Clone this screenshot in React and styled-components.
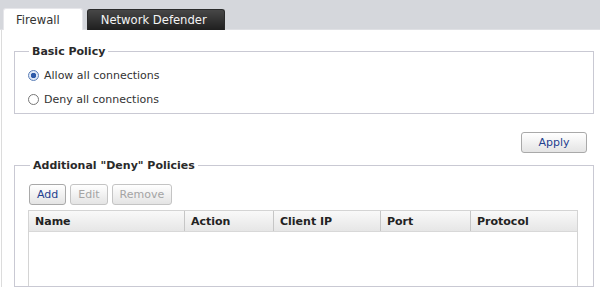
import React from "react";
import styled, { createGlobalStyle } from "styled-components";

const GlobalStyle = createGlobalStyle`
  html, body {
    margin: 0;
    padding: 0;
    background: #ffffff;
  }
  body {
    font-family: "DejaVu Sans", Verdana, sans-serif;
    font-size: 11px;
    color: #222;
  }
`;

const columns = [
  { label: "Name", width: 156 },
  { label: "Action", width: 89 },
  { label: "Client IP", width: 107 },
  { label: "Port", width: 90 },
  { label: "Protocol", width: 106 },
];

const App = () => {
  return (
    <>
      <GlobalStyle />
      <Page>
        <TabBar>
          <Tab active>Firewall</Tab>
          <Tab>Network Defender</Tab>
        </TabBar>
        <Content>
          <Group>
            <Legend>Basic Policy</Legend>
            <RadioRow>
              <Radio checked />
              Allow all connections
            </RadioRow>
            <RadioRow>
              <Radio />
              Deny all connections
            </RadioRow>
          </Group>

          <ApplyRow>
            <Button primary wide>
              Apply
            </Button>
          </ApplyRow>

          <Group deny>
            <Legend>Additional "Deny" Policies</Legend>
            <Toolbar>
              <Button primary>Add</Button>
              <Button disabled>Edit</Button>
              <Button disabled>Remove</Button>
            </Toolbar>
            <Table>
              <HeaderRow>
                {columns.map((c) => (
                  <HeaderCell key={c.label} style={{ width: c.width }}>
                    {c.label}
                  </HeaderCell>
                ))}
              </HeaderRow>
              <Body />
            </Table>
          </Group>
        </Content>
      </Page>
    </>
  );
};

export default App;

const Page = styled.div`
  width: 600px;
  height: 287px;
  overflow: hidden;
  display: flex;
  flex-direction: column;
`;

const TabBar = styled.div`
  height: 30px;
  box-sizing: border-box;
  background: #d5d7dc;
  display: flex;
  align-items: flex-end;
  padding-left: 3px;
  gap: 4px;
  border-bottom: 1px solid #dfe0e4;
`;

const Tab = styled.div`
  height: ${(p) => (p.active ? 22 : 21)}px;
  box-sizing: border-box;
  padding: 0 ${(p) => (p.active ? 22 : 17)}px 0 ${(p) => (p.active ? 12 : 13)}px;
  display: flex;
  align-items: center;
  border-radius: 3px 3px 0 0;
  font-size: 11.6px;
  margin-bottom: -1px;
  background: ${(p) =>
    p.active ? "#ffffff" : "linear-gradient(#474747, #1f1f1f)"};
  color: ${(p) => (p.active ? "#333" : "#f4f4f4")};
  border: 1px solid ${(p) => (p.active ? "#e6e6ea" : "#2a2a2a")};
  border-bottom: none;
`;

const Content = styled.div`
  flex: 1;
  margin-left: 1px;
  border-left: 1px solid #dcdcdc;
  padding: 15px 6px 0 12px;
  display: flex;
  flex-direction: column;
`;

const Group = styled.fieldset`
  margin: 0;
  border: 1px solid #c9c9d3;
  padding: ${(p) => (p.deny ? "12px 14px 0 14px" : "5px 14px 2px 13px")};
  display: flex;
  flex-direction: column;
  ${(p) => p.deny && "flex: 1;"}
`;

const Legend = styled.legend`
  font-weight: bold;
  color: #2a2a2a;
  padding: 0 3px;
  margin-left: 1px;
  font-size: 11px;
`;

const RadioRow = styled.label`
  display: flex;
  align-items: center;
  height: 24px;
  gap: 5px;
  color: #333;
`;

const Radio = styled.span`
  width: 9px;
  height: 9px;
  border-radius: 50%;
  border: 1px solid ${(p) => (p.checked ? "#5c7fb8" : "#777")};
  background: ${(p) =>
    p.checked
      ? "radial-gradient(circle, #2e5aa8 0 2.5px, #dfe8f6 3px)"
      : "#ffffff"};
  flex-shrink: 0;
`;

const ApplyRow = styled.div`
  display: flex;
  justify-content: flex-end;
  padding: 18px 7px 6px 0;
`;

const Button = styled.button`
  font-family: "DejaVu Sans", Verdana, sans-serif;
  font-size: 11px;
  height: 21px;
  box-sizing: border-box;
  padding: 0 7px;
  min-width: ${(p) => (p.wide ? "66px" : "36px")};
  border-radius: 3px;
  border: 1px solid ${(p) => (p.disabled ? "#c4c4c4" : "#a9a9a9")};
  background: linear-gradient(#ffffff, #e4e4e4);
  color: ${(p) => (p.disabled ? "#a4a4a4" : "#23408f")};
`;

const Toolbar = styled.div`
  display: flex;
  gap: 4px;
  margin-bottom: 5px;
`;

const Table = styled.div`
  flex: 1;
  width: 550px;
  margin-left: -1px;
  box-sizing: border-box;
  border: 1px solid #d4d4d4;
  border-bottom: none;
  display: flex;
  flex-direction: column;
`;

const HeaderRow = styled.div`
  display: flex;
  height: 20px;
  background: linear-gradient(#f9f9f9, #e6e6e6);
  border-bottom: 1px solid #d8d8d8;
`;

const HeaderCell = styled.div`
  box-sizing: border-box;
  padding-left: 6px;
  display: flex;
  align-items: center;
  font-weight: bold;
  color: #222;
  border-right: 1px solid #c6c6c6;
  &:last-child {
    border-right: none;
  }
`;

const Body = styled.div`
  flex: 1;
  background: #ffffff;
`;
